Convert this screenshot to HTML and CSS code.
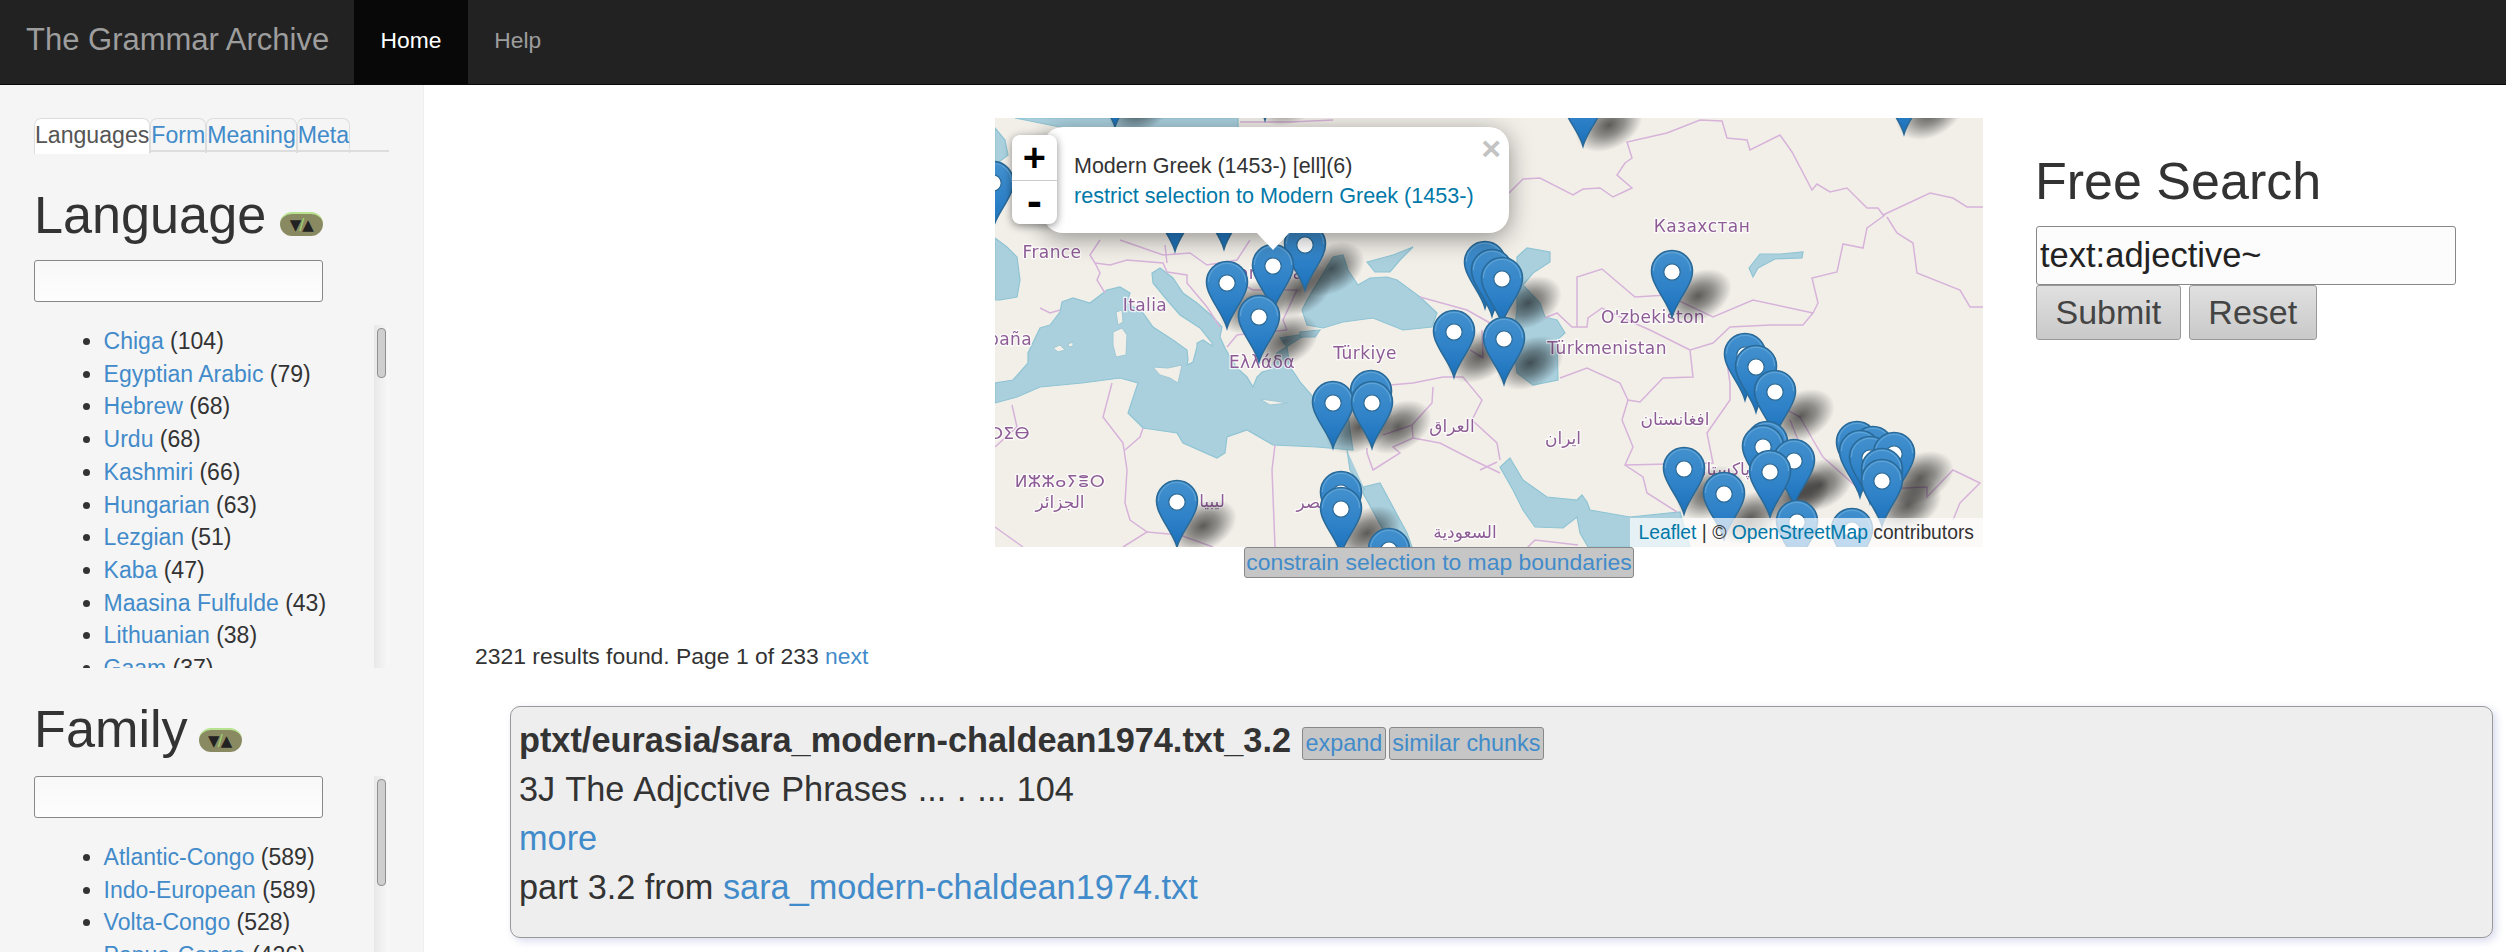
FILE: index.html
```html
<!DOCTYPE html>
<html lang="en">
<head>
<meta charset="utf-8">
<title>The Grammar Archive</title>
<link rel="stylesheet" href="styles.css">
</head>
<body>
<nav class="navbar">
  <a class="brand">The Grammar Archive</a>
  <a class="nav-item active">Home</a>
  <a class="nav-item">Help</a>
</nav>
<div class="page">
  <aside class="sidebar">
    <ul class="tabs">
      <li class="tab current">Languages</li>
      <li class="tab"><a>Form</a></li>
      <li class="tab"><a>Meaning</a></li>
      <li class="tab"><a>Meta</a></li>
    </ul>
    <section class="facet facet-language">
      <div class="facet-head"><h2>Language</h2><span class="badge"><i>▼</i><b>/</b><i>▲</i></span></div>
      <input class="filter" type="text">
      <div class="list-wrap">
        <ul class="list">
          <li><a>Chiga</a> (104)</li>
          <li><a>Egyptian Arabic</a> (79)</li>
          <li><a>Hebrew</a> (68)</li>
          <li><a>Urdu</a> (68)</li>
          <li><a>Kashmiri</a> (66)</li>
          <li><a>Hungarian</a> (63)</li>
          <li><a>Lezgian</a> (51)</li>
          <li><a>Kaba</a> (47)</li>
          <li><a>Maasina Fulfulde</a> (43)</li>
          <li><a>Lithuanian</a> (38)</li>
          <li><a>Gaam</a> (37)</li>
        </ul>
        <div class="track"><div class="thumb"></div></div>
      </div>
    </section>
    <section class="facet facet-family">
      <div class="facet-head"><h2>Family</h2><span class="badge"><i>▼</i><b>/</b><i>▲</i></span></div>
      <input class="filter" type="text">
      <div class="list-wrap">
        <ul class="list">
          <li><a>Atlantic-Congo</a> (589)</li>
          <li><a>Indo-European</a> (589)</li>
          <li><a>Volta-Congo</a> (528)</li>
          <li><a>Papua-Congo</a> (426)</li>
        </ul>
        <div class="track"><div class="thumb"></div></div>
      </div>
    </section>
  </aside>
  <main class="main">
    <div class="top">
      <div class="map-col">
        <div class="map">
          <svg class="map-svg" width="988" height="429" viewBox="995 118 988 429" xmlns="http://www.w3.org/2000/svg">
            <defs>
              <linearGradient id="pinfill" x1="0" y1="0" x2="0" y2="1">
                <stop offset="0" stop-color="#4390cd"/>
                <stop offset="0.55" stop-color="#2f82c8"/>
                <stop offset="1" stop-color="#1a70bb"/>
              </linearGradient>
              <radialGradient id="shadefill">
                <stop offset="0" stop-color="#000" stop-opacity="0.62"/>
                <stop offset="0.45" stop-color="#000" stop-opacity="0.4"/>
                <stop offset="1" stop-color="#000" stop-opacity="0"/>
              </radialGradient>
              <filter id="tile" x="-2%" y="-2%" width="104%" height="104%"><feGaussianBlur stdDeviation="0.45"/></filter>
              <g id="pin">
                <path d="M0,45 C-3,34 -12,23 -17,12 C-19.5,7 -20.5,3 -20.5,-1 A20.5,20.5 0 0 1 20.5,-1 C20.5,3 19.5,7 17,12 C12,23 3,34 0,45Z" fill="url(#pinfill)" stroke="#2a6a99" stroke-width="1.6"/>
                <path d="M-18.6,-1 A18.6,18.6 0 0 1 18.6,-1" fill="none" stroke="#5da3d8" stroke-width="1.2"/>
                <circle r="8.2" fill="#fff" stroke="#2c6a96" stroke-width="1.2"/>
              </g>
              <ellipse id="shade" cx="26" cy="24" rx="36" ry="24" transform="rotate(-28 26 24)" fill="url(#shadefill)"/>
            </defs>
            <rect x="995" y="118" width="988" height="429" fill="#f2efe9"/>
            <g filter="url(#tile)">
              <g class="sea">
                <path d="M995,403 L1017,397 1040,387 1082,383 1120,378 1138,383 1128,413 1143,428 1177,433 1183,443 1217,458 1225,453 1227,437 1247,430 1273,445 1317,447 1353,450 1350,430 1347,403 1345,395 1313,397 1300,382 1297,377 1290,367 1287,347 1280,338 1317,332 1300,338 1277,353 1270,370 1262,372 1257,377 1253,387 1247,377 1237,368 1230,357 1225,348 1220,337 1222,327 1213,317 1197,303 1183,293 1173,278 1160,268 1152,273 1153,283 1167,300 1180,315 1200,328 1212,343 1212,346 1203,340 1197,343 1197,347 1193,362 1187,365 1188,360 1187,350 1173,340 1153,327 1143,313 1127,303 1130,293 1120,287 1107,290 1090,303 1073,298 1062,302 1060,312 1050,325 1040,328 1028,353 1028,363 1013,380 995,383Z"/>
                <path d="M1302,310 L1307,300 1333,257 1343,255 1348,270 1358,285 1370,278 1387,277 1397,280 1420,297 1437,313 1432,327 1403,330 1373,318 1343,322 1323,328 1307,325Z"/>
                <path d="M1367,262 L1393,255 1413,247 1400,260 1390,272 1375,272Z"/>
                <path d="M1300,332 L1320,330 1315,337 1300,337Z"/>
                <path d="M995,238 L1007,247 1017,257 1020,280 1017,297 1000,300 995,300Z"/>
                <path d="M1015,118 L1238,118 1238,128 1170,150 1100,135Z"/>
                <path d="M995,128 L1005,140 1008,155 995,165Z"/>
                <path d="M1517,257 L1527,248 1550,252 1550,262 1533,273 1523,285 1540,303 1545,317 1557,320 1565,333 1557,340 1558,380 1533,385 1517,373 1513,340 1517,310Z"/>
                <path d="M1749,268 L1760,254 1780,254 1803,252 1802,258 1775,259 1758,268 1753,277Z"/>
                <path d="M1510,458 L1523,480 1547,497 1577,500 1582,495 1587,502 1590,510 1630,517 1680,512 1690,547 1588,547 1580,533 1577,517 1563,528 1535,527 1523,510 1513,490 1500,467Z"/>
                <path d="M1363,487 L1380,483 1407,533 1412,547 1392,547 1375,515 1363,493Z"/>
                <path d="M1347,450 L1350,470 1365,490" fill="none" stroke="#a9d1de" stroke-width="3"/>
              </g>
              <g class="land">
                <path d="M1113,332 L1122,328 1127,335 1126,355 1116,357 1113,345Z"/>
                <path d="M1116,312 L1122,310 1123,322 1118,325Z"/>
                <path d="M1153,367 L1168,368 1182,365 1178,383 1170,378 1160,375Z"/>
                <path d="M1053,348 L1060,345 1065,350 1058,352Z"/>
                <path d="M1068,344 L1073,342 1073,346 1069,347Z"/>
                <path d="M1260,399 L1275,401 1288,403 1270,405Z"/>
              </g>
              <g class="borders">
                <path d="M1509,193 L1523,179 1540,178 1573,195 1583,189 1600,188 1613,197 1632,188 1617,175 1625,163 1632,158 1627,142 1667,133 1700,120 1722,121 1727,138 1747,140 1750,150 1780,135 1792,152 1812,190 1817,184 1830,192 1847,188 1867,208 1878,208 1883,215 1930,193 1953,198 1967,207 1983,207"/>
                <path d="M1885,215 L1867,228 1863,248 1843,244 1837,272 1812,278 1818,303 1813,313"/>
                <path d="M1887,217 L1897,233 1913,243 1917,273 1960,290 1970,307 1983,307"/>
                <path d="M1577,327 L1577,277 1602,269 1635,297 1667,295 1713,317 1753,300 1813,313 1803,325 1770,325 1730,327 1713,343 1690,350 1693,377 1663,378 1640,402 1628,400 1620,383 1587,368 1560,378"/>
                <path d="M1545,318 L1557,313 1572,327 1587,327 1588,318 1602,308 1627,320 1650,330 1690,350"/>
                <path d="M1628,400 L1622,420 1633,447 1625,465 1643,477 1647,493 1677,512"/>
                <path d="M1625,465 L1713,463 1707,433 1730,400 1730,383 1725,350 1760,395 1800,417 1813,440 1823,457 1860,490 1927,487 1927,497 1953,470 1980,483 1960,503 1953,520"/>
                <path d="M1790,420 L1810,470 1790,515 1770,520"/>
                <path d="M1390,385 L1413,383 1443,377 1463,377 1482,400 1472,420 1497,443 1500,460"/>
                <path d="M1433,387 L1432,403 1412,425 1383,435"/>
                <path d="M1412,425 L1413,438 1393,447 1400,453 1373,470 1367,453 1367,448"/>
                <path d="M1413,438 L1440,443 1473,460 1500,473"/>
                <path d="M1275,445 L1272,470 1275,547"/>
                <path d="M1112,383 L1103,417 1123,443 1127,470 1125,503 1130,520 1147,532 1123,547"/>
                <path d="M1143,428 L1140,437 1125,450"/>
                <path d="M1147,532 L1180,535 1213,547"/>
                <path d="M1012,405 L1017,427 995,447"/>
                <path d="M995,527 L1023,547"/>
                <path d="M1040,308 L1050,313 1060,310"/>
                <path d="M1100,240 L1090,255 1095,263 1100,273 1097,280 1105,293"/>
                <path d="M1095,263 L1110,265 1127,260 1163,263 1167,272 1187,275 1187,283 1207,307 1220,327"/>
                <path d="M1120,240 L1163,255 1190,253 1207,265 1237,260 1250,240"/>
                <path d="M1240,283 L1253,290 1297,290 1283,320 1287,330"/>
                <path d="M1227,347 L1237,335 1253,333 1287,330"/>
                <path d="M1167,263 L1165,245"/>
                <path d="M1240,122 L1290,122 1333,120"/>
                <path d="M1420,297 L1467,310 1490,323"/>
                <path d="M1470,350 L1483,358 1482,330"/>
                <path d="M1480,470 L1497,462"/>
                <path d="M1578,545 L1535,540 1520,555"/>
              </g>
              <g class="labels">
                <text x="1052" y="258" text-anchor="middle">France</text>
                <text x="1145" y="311" text-anchor="middle">Italia</text>
                <text x="1032" y="345" text-anchor="end">España</text>
                <text x="1265" y="279" text-anchor="middle">România</text>
                <text x="1365" y="359" text-anchor="middle">Türkiye</text>
                <text x="1262" y="368" text-anchor="middle">Ελλάδα</text>
                <text x="1702" y="232" text-anchor="middle">Казахстан</text>
                <text x="1653" y="323" text-anchor="middle">O'zbekiston</text>
                <text x="1607" y="354" text-anchor="middle">Türkmenistan</text>
                <text x="1452" y="432" text-anchor="middle">العراق</text>
                <text x="1563" y="444" text-anchor="middle">ايران</text>
                <text x="1675" y="425" text-anchor="middle">افغانستان</text>
                <text x="1722" y="475" text-anchor="middle">پاکستان</text>
                <text x="1465" y="538" text-anchor="middle">السعودية</text>
                <text x="1212" y="507" text-anchor="middle">ليبيا</text>
                <text x="1313" y="508" text-anchor="middle">مصر</text>
                <text x="1060" y="508" text-anchor="middle">الجزائر</text>
                <text x="1060" y="487" text-anchor="middle">ⵍⵣⵣⴰⵢⴻⵔ</text>
                <text x="1030" y="439" text-anchor="end">ⵍⵎⵖⵔⵉⴱ</text>
              </g>
            </g>
            <use href="#shade" x="1115" y="82"/><use href="#shade" x="1265" y="75"/><use href="#shade" x="1904" y="89"/><use href="#shade" x="1583" y="101"/>
            <use href="#shade" x="1305" y="245"/><use href="#shade" x="1273" y="266"/><use href="#shade" x="1672" y="272"/><use href="#shade" x="1502" y="279"/><use href="#shade" x="1227" y="283"/><use href="#shade" x="1259" y="317"/><use href="#shade" x="1454" y="332"/><use href="#shade" x="1504" y="339"/><use href="#shade" x="1775" y="392"/><use href="#shade" x="1372" y="403"/><use href="#shade" x="1333" y="403"/><use href="#shade" x="1341" y="509"/><use href="#shade" x="1177" y="502"/><use href="#shade" x="1684" y="469"/><use href="#shade" x="1724" y="494"/><use href="#shade" x="1794" y="461"/><use href="#shade" x="1770" y="472"/><use href="#shade" x="1894" y="454"/><use href="#shade" x="1882" y="481"/>
            <use href="#pin" x="1265" y="75"/><use href="#pin" x="1115" y="82"/><use href="#pin" x="1904" y="89"/><use href="#pin" x="1583" y="101"/>
            <use href="#pin" x="993" y="183"/><use href="#pin" x="1224" y="204"/><use href="#pin" x="1175" y="206"/>
            <use href="#pin" x="1305" y="245"/><use href="#pin" x="1485" y="263"/><use href="#pin" x="1273" y="266"/><use href="#pin" x="1492" y="271"/><use href="#pin" x="1672" y="272"/><use href="#pin" x="1502" y="279"/><use href="#pin" x="1227" y="283"/><use href="#pin" x="1259" y="317"/><use href="#pin" x="1454" y="332"/><use href="#pin" x="1504" y="339"/>
            <use href="#pin" x="1745" y="355"/><use href="#pin" x="1756" y="367"/><use href="#pin" x="1371" y="392"/><use href="#pin" x="1775" y="392"/><use href="#pin" x="1333" y="403"/><use href="#pin" x="1372" y="403"/>
            <use href="#pin" x="1767" y="443"/><use href="#pin" x="1857" y="443"/><use href="#pin" x="1763" y="447"/><use href="#pin" x="1873" y="448"/><use href="#pin" x="1860" y="452"/><use href="#pin" x="1870" y="458"/><use href="#pin" x="1894" y="454"/><use href="#pin" x="1794" y="461"/><use href="#pin" x="1684" y="469"/><use href="#pin" x="1882" y="470"/><use href="#pin" x="1770" y="472"/><use href="#pin" x="1882" y="481"/>
            <use href="#pin" x="1341" y="493"/><use href="#pin" x="1724" y="494"/><use href="#pin" x="1177" y="502"/><use href="#pin" x="1341" y="509"/><use href="#pin" x="1797" y="522"/><use href="#pin" x="1852" y="530"/><use href="#pin" x="1389" y="550"/>
          </svg>
          <div class="popup">
            <a class="popup-close">×</a>
            <div class="popup-title">Modern Greek (1453-) [ell](6)</div>
            <a class="popup-link">restrict selection to Modern Greek (1453-)</a>
            <div class="popup-tip"></div>
          </div>
          <div class="zoom">
            <a class="zoom-btn">+</a>
            <a class="zoom-btn">-</a>
          </div>
          <div class="attribution"><a>Leaflet</a> | © <a>OpenStreetMap</a> contributors</div>
        </div>
        <div class="constrain"><button class="mini-btn" type="button"><a>constrain selection to map boundaries</a></button></div>
      </div>
      <form class="search">
        <h2>Free Search</h2>
        <input class="search-input" type="text" value="text:adjective~">
        <div class="search-actions">
          <button class="action" type="button">Submit</button>
          <button class="action" type="button">Reset</button>
        </div>
      </form>
    </div>
    <p class="summary">2321 results found. Page 1 of 233 <a>next</a></p>
    <article class="card">
      <div class="card-title"><b>ptxt/eurasia/sara_modern-chaldean1974.txt_3.2</b><span class="card-actions"><button class="mini-btn" type="button"><a>expand</a></button><button class="mini-btn" type="button"><a>similar chunks</a></button></span></div>
      <div class="card-line card-excerpt">3J The Adjcctive Phrases ... . ... 104</div>
      <div class="card-line"><a>more</a></div>
      <div class="card-line">part 3.2 from <a>sara_modern-chaldean1974.txt</a></div>
    </article>
  </main>
</div>
</body>
</html>
```
FILE: styles.css
```css
* { box-sizing: border-box; }
html, body { margin: 0; height: 952px; overflow: hidden; }
body { font-family: "Liberation Sans", Arial, sans-serif; color: #333; background: #fff; font-size: 23px; }
a { color: #428bca; text-decoration: none; }

.navbar { display: flex; height: 85px; background: #222; border-bottom: 1px solid #080808; }
.brand { width: 354px; padding-left: 26px; font-size: 31px; line-height: 80px; color: #9d9d9d; }
.nav-item { padding: 0 26.5px; line-height: 80px; font-size: 22.8px; color: #9d9d9d; }
.nav-item.active { color: #fff; background: #080808; }

.page { display: flex; height: 867px; }
.sidebar { flex: 0 0 424px; height: 867px; overflow: hidden; padding: 33px 34px 0 34px; background: #f5f5f5; border-right: 1px solid #eee; }

.tabs { display: flex; list-style: none; margin: 0; padding: 0; height: 34px; border-bottom: 2px solid #ddd; font-size: 23.1px; }
.tab { height: 35px; line-height: 32px; padding: 0; border: 1px solid #ddd; border-bottom: 0; border-radius: 7px 7px 0 0; }
.tab.current { background: #fff; color: #555; height: 36px; }

.facet { position: relative; }
.facet-head { display: flex; align-items: flex-end; gap: 14px; height: 56px; }
.facet-language { margin-top: 35px; }
.facet-family { margin-top: 33px; }
.facet-family .facet-head { gap: 11px; }
h2 { margin: 0; font-weight: 400; font-size: 52.2px; line-height: 56px; color: #333; }
.badge { display: flex; align-items: center; justify-content: center; width: 43px; height: 24px; margin-bottom: 7px; border-radius: 12px; background: #8a8a62; border-top: 2px solid #b7e28f; font-size: 15px; line-height: 20px; color: #222; font-family: "DejaVu Sans", sans-serif; }
.badge i { font-style: normal; }
.badge b { font-weight: 400; color: #9fd56f; margin: 0 -2px; }
.facet-family .badge { margin-bottom: 5px; }
.filter { display: block; width: 289px; height: 42px; margin-top: 17px; padding: 0 2px; border: 1px solid #888; border-radius: 3px; background: linear-gradient(#f8f8f8, #fdfdfd); }
.facet-family .filter { margin-top: 19px; }

.list-wrap { position: relative; margin-top: 23px; height: 343px; }
.facet-family .list-wrap { height: 120px; }
.list { height: 100%; overflow: hidden; margin: 0; padding: 0 0 0 69.6px; list-style: disc; line-height: 32.7px; }
.track { position: absolute; top: 0; right: 0; bottom: 0; width: 15px; background: linear-gradient(90deg, #e8e8e8, #f8f8f8); }
.thumb { margin: 3px 0 0 3px; width: 9px; height: 50px; border-radius: 4px; border: 1px solid #8f8f8f; background: #cfcfcf; }
.facet-family .track { top: -65px; }
.facet-family .thumb { height: 107px; }

.main { flex: 1; min-width: 0; padding: 33px 12px 0 51px; }
.top { display: flex; padding-left: 520px; }
.map-col { flex: 0 0 988px; }
.map { position: relative; height: 429px; width: 988px; overflow: hidden; }
.map-svg { display: block; }
.sea path { fill: #aad0de; stroke: #8fc4d3; stroke-width: 1.2; }
.land path { fill: #f2efe9; stroke: #9fc8d5; stroke-width: 1; }
.borders path { fill: none; stroke: #d7b3da; stroke-width: 1.5; }
.labels text { font-family: "DejaVu Sans", "Noto Sans", sans-serif; font-size: 17px; letter-spacing: 0.4px; fill: #8d5c96; stroke: #fff; stroke-width: 2.5px; paint-order: stroke; stroke-opacity: 0.75; }

.popup { position: absolute; left: 48px; top: 9px; width: 466px; height: 106px; padding: 25px 0 0 31px; background: #fff; border-radius: 20px; box-shadow: 0 5px 25px rgba(0, 0, 0, 0.4); font-size: 21.5px; line-height: 29px; color: #333; }
.popup-link { color: #0078a8; font-size: 21.6px; }
.popup-close { position: absolute; top: 3px; right: 8px; font-size: 34px; line-height: 36px; font-weight: 700; color: #c3c3c3; }
.popup-tip { position: absolute; left: 213px; top: 105px; width: 34px; height: 18px; overflow: hidden; background: #fff; clip-path: polygon(0 0, 100% 0, 50% 100%); }
.zoom { position: absolute; left: 17px; top: 17px; width: 45px; height: 89px; border-radius: 8px; background: #fff; box-shadow: 0 2px 9px rgba(0, 0, 0, 0.45); }
.zoom-btn { display: block; height: 44.5px; text-align: center; font: 700 37px/46px "DejaVu Sans Mono", "Liberation Mono", monospace; color: #000; }
.zoom-btn + .zoom-btn { border-top: 1px solid #ccc; line-height: 44px; }
.attribution { position: absolute; right: 0; bottom: 0; height: 29px; padding: 0 9px; background: rgba(255, 255, 255, 0.7); font-size: 19.3px; line-height: 29px; color: #333; }
.attribution a { color: #0078a8; }

.constrain { display: flex; justify-content: center; }
.constrain .mini-btn { margin-left: -100px; }
.mini-btn { height: 31px; padding: 0 1px; border: 1px solid #888; border-radius: 3px; background: #c6c6c6; font: 400 22.9px/27px "Liberation Sans", Arial, sans-serif; }

.search { flex: 0 0 420px; margin-left: 52px; }
.search h2 { font-size: 52px; line-height: 56px; margin-top: 35px; }
.search-input { display: block; margin-left: 1px; width: 420px; height: 59px; margin-top: 17px; padding: 0 3px; border: 1px solid #888; border-radius: 3px; background: #fcfcfc; font: 400 34.5px "Liberation Sans", Arial, sans-serif; color: #222; }
.search-actions { display: flex; gap: 8px; padding-left: 1px; }
.action { height: 55px; padding: 0 18.5px; border: 1px solid #999; border-radius: 3px; background: linear-gradient(#e0e0e0, #c9c9c9); font: 400 34px "Liberation Sans", Arial, sans-serif; color: #444; }

.summary { margin: 62px 0 0; line-height: 33px; font-size: 22.9px; }
.card { margin: 33px 0 0 35px; width: 1983px; height: 232px; padding: 9px 8px; background: #eee; border: 1px solid #999; border-radius: 10px; box-shadow: 3px 3px 8px #d9dbee; font-size: 34.3px; line-height: 49px; }
.card-title b { font-weight: 700; }
.card-excerpt { word-spacing: 1.2px; }
.card-actions { display: inline-flex; gap: 3px; margin-left: 11px; vertical-align: 1px; }
.card-actions .mini-btn { height: 33px; padding: 0 2.5px; font-size: 23.4px; }
```
